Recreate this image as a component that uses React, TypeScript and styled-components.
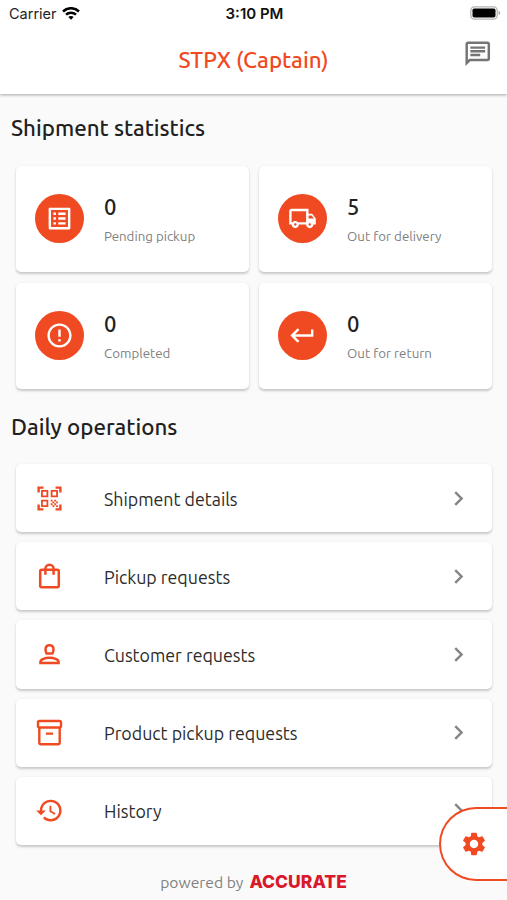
import React from "react";
import styled, { createGlobalStyle } from "styled-components";
import {
  MdChevronRight,
  MdErrorOutline,
  MdHistory,
  MdKeyboardReturn,
  MdOutlineChat,
  MdOutlineListAlt,
  MdOutlineLocalShipping,
  MdQrCodeScanner,
  MdSettings,
} from "react-icons/md";

const accent = "#f04a22";

const GlobalStyle = createGlobalStyle`
  *, *::before, *::after { box-sizing: border-box; }
  body {
    margin: 0;
    background: #fafafa;
    font-family: Ubuntu, "Noto Sans", sans-serif;
    color: #212121;
  }
  svg { display: block; }
`;

const Screen = styled.div`
  position: relative;
  height: 900px;
  overflow: hidden;
  display: flex;
  flex-direction: column;
`;

const Header = styled.header`
  height: 94px;
  flex: none;
  background: #fff;
  box-shadow: 0 1px 3px rgba(0, 0, 0, 0.34);
`;

const StatusBar = styled.div`
  height: 27px;
  padding: 0 7px 0 9px;
  display: grid;
  grid-template-columns: 1fr auto 1fr;
  align-items: center;
  font-family: Inter, "Liberation Sans", sans-serif;
  font-size: 14.5px;
  color: #222;
`;

const Carrier = styled.div`
  display: flex;
  align-items: center;
  gap: 5px;
`;

const Clock = styled.div`
  font-size: 15px;
  font-weight: 600;
  color: #111;
`;

const BatterySlot = styled.div`
  justify-self: end;
  margin: -1px -1px 0 0;
`;

const TitleBar = styled.div`
  height: 67px;
  padding: 0 15px;
  display: grid;
  grid-template-columns: 1fr auto 1fr;
`;

const Title = styled.h1`
  grid-column: 2;
  margin: 19px 0 0;
  font-size: 22.4px;
  line-height: 28px;
  font-weight: 500;
  color: ${accent};
`;

const ChatButton = styled.div`
  justify-self: end;
  margin-top: 12px;
  font-size: 29.5px;
  color: #757575;
`;

const SectionTitle = styled.h2<{ $top: number }>`
  margin: ${(p) => p.$top}px 11px 0;
  font-size: 22.3px;
  line-height: 28px;
  font-weight: 500;
`;

const Surface = styled.div`
  background: #fff;
  border-radius: 5px;
  box-shadow: 0 1.5px 2.5px rgba(0, 0, 0, 0.2);
`;

const Stats = styled.div`
  margin: 23.5px 15px 0 16px;
  display: grid;
  grid-template-columns: 1fr 1fr;
  grid-auto-rows: 106.5px;
  gap: 10.5px 10px;
`;

const StatCard = styled(Surface)`
  display: flex;
  align-items: center;
  gap: 20px;
  padding: 0 19px 1px;
`;

const Badge = styled.div`
  width: 49px;
  height: 49px;
  border-radius: 50%;
  background: ${accent};
  color: #fff;
  font-size: 29px;
  display: grid;
  place-items: center;
`;

const StatValue = styled.div`
  margin-top: 3px;
  font-size: 22px;
  line-height: 28px;
  font-weight: 500;
`;

const StatLabel = styled.div`
  margin-top: 7px;
  font-size: 13.3px;
  line-height: 18px;
  color: #808080;
`;

const Operations = styled.div`
  margin: 23px 15px 0 16px;
  display: grid;
  grid-auto-rows: 68.2px;
  gap: 10px;
`;

const OperationRow = styled(Surface)`
  display: grid;
  grid-template-columns: 69px 1fr 30px;
  align-items: center;
  padding: 0 18.5px 0 19px;
`;

const OperationIcon = styled.div`
  font-size: 29px;
  width: 29px;
  color: ${accent};
`;

const OperationName = styled.div`
  padding-top: 1px;
  font-size: 17.8px;
  line-height: 24px;
  color: #2c2c2c;
`;

const Arrow = styled.div`
  font-size: 29px;
  color: #858585;
`;

const Footer = styled.footer`
  margin-top: 26px;
  display: flex;
  justify-content: center;
  align-items: center;
  gap: 6px;
  height: 22px;
  font-size: 15.7px;
  color: #808080;
`;

const Brand = styled.span`
  font-family: Inter, "Liberation Sans", sans-serif;
  font-size: 17.5px;
  font-weight: 800;
  color: #d9182b;
`;

const SettingsTab = styled.div`
  position: absolute;
  right: -3px;
  top: 807px;
  width: 71px;
  height: 73.5px;
  padding-left: 19px;
  display: flex;
  align-items: center;
  font-size: 28px;
  color: ${accent};
  background: #fff;
  border: 2.5px solid ${accent};
  border-right: 0;
  border-radius: 37px 0 0 37px;
`;

const WifiIcon = () => (
  <svg width="18" height="14" viewBox="0 0 18 14" fill="none" stroke="#000" strokeWidth="2.5">
    <path d="M1 4.500C5.500.1 12.500.1 17 4.500" />
    <path d="M4 7.700c2.800-2.700 7.200-2.700 10 0" />
    <path d="M6.300 10c1.500-1.400 3.900-1.400 5.400 0L9 12.800z" fill="#000" stroke="none" />
  </svg>
);

const BatteryIcon = () => (
  <svg width="31" height="14" viewBox="0 0 31 14">
    <rect x=".8" y=".8" width="26.400" height="12.400" rx="3.600" fill="#fff" stroke="#b4b4b4" strokeWidth="1.300" />
    <rect x="2.500" y="2.500" width="23" height="9" rx="1.800" fill="#000" />
    <path d="M28.600 4.800c2.200.6 2.200 3.800 0 4.400z" fill="#aaa" />
  </svg>
);

const BagIcon = () => (
  <svg width="1em" height="1em" viewBox="0 0 29 29" fill="none" stroke="currentColor" strokeWidth="2.500">
    <rect x="5.200" y="7.700" width="18.600" height="17.600" rx="1.500" />
    <path d="M10.400 12.800V6.900a4.100 4.100 0 0 1 8.200 0v5.900" />
  </svg>
);

const PersonIcon = () => (
  <svg width="1em" height="1em" viewBox="0 0 29 29" fill="none" stroke="currentColor" strokeWidth="2.500">
    <path d="M14.500 5.300c2.500 0 4 1.900 4 4.300 0 1.700-.4 3-1.200 4h-5.600c-.8-1-1.200-2.300-1.200-4 0-2.400 1.500-4.300 4-4.300z" />
    <path d="M5.400 23v-1c0-2.800 4.900-4.200 9.100-4.200s9.100 1.400 9.100 4.200v1z" />
  </svg>
);

const ArchiveIcon = () => (
  <svg width="1em" height="1em" viewBox="0 0 29 29" fill="none" stroke="currentColor" strokeWidth="2.400">
    <rect x="3" y="3" width="23" height="6.500" rx="1.500" />
    <path d="M4.300 9.500v15.100c0 1 .7 1.700 1.700 1.700h17c1 0 1.700-.7 1.700-1.700V9.500M10.900 15.600h7.200" />
  </svg>
);

const stats = [
  { value: 0, label: "Pending pickup", icon: <MdOutlineListAlt /> },
  { value: 5, label: "Out for delivery", icon: <MdOutlineLocalShipping /> },
  { value: 0, label: "Completed", icon: <MdErrorOutline /> },
  { value: 0, label: "Out for return", icon: <MdKeyboardReturn /> },
];

const operations = [
  { name: "Shipment details", icon: <MdQrCodeScanner /> },
  { name: "Pickup requests", icon: <BagIcon /> },
  { name: "Customer requests", icon: <PersonIcon /> },
  { name: "Product pickup requests", icon: <ArchiveIcon /> },
  { name: "History", icon: <MdHistory /> },
];

export default function App() {
  return (
    <Screen>
      <GlobalStyle />
      <Header>
        <StatusBar>
          <Carrier>
            Carrier
            <WifiIcon />
          </Carrier>
          <Clock>3:10 PM</Clock>
          <BatterySlot>
            <BatteryIcon />
          </BatterySlot>
        </StatusBar>
        <TitleBar>
          <Title>STPX (Captain)</Title>
          <ChatButton>
            <MdOutlineChat />
          </ChatButton>
        </TitleBar>
      </Header>
      <SectionTitle $top={20}>Shipment statistics</SectionTitle>
      <Stats>
        {stats.map((s) => (
          <StatCard key={s.label}>
            <Badge>{s.icon}</Badge>
            <div>
              <StatValue>{s.value}</StatValue>
              <StatLabel>{s.label}</StatLabel>
            </div>
          </StatCard>
        ))}
      </Stats>
      <SectionTitle $top={24}>Daily operations</SectionTitle>
      <Operations>
        {operations.map((o) => (
          <OperationRow key={o.name}>
            <OperationIcon>{o.icon}</OperationIcon>
            <OperationName>{o.name}</OperationName>
            <Arrow>
              <MdChevronRight />
            </Arrow>
          </OperationRow>
        ))}
      </Operations>
      <Footer>
        powered by <Brand>ACCURATE</Brand>
      </Footer>
      <SettingsTab>
        <MdSettings />
      </SettingsTab>
    </Screen>
  );
}
